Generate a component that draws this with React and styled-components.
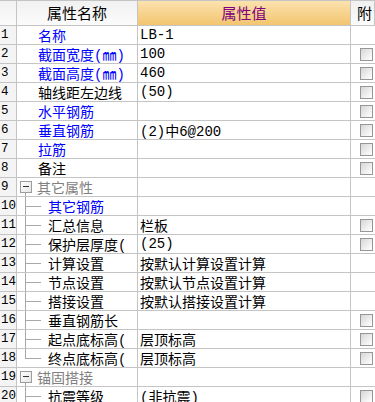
import React from 'react'
import styled, { createGlobalStyle, css } from 'styled-components'

const GlobalStyle = createGlobalStyle`
  html, body {
    margin: 0;
    padding: 0;
    background: #ffffff;
  }
`

const FONT = `"Liberation Mono", "Noto Sans CJK SC", monospace`
const LINE = '#c4c4c4'
const TREE = '#a8a8a8'

const Grid = styled.div`
  display: grid;
  grid-template-columns: 17px 121px 213px 24px;
  align-content: start;
  width: 375px;
  height: 402px;
  overflow: hidden;
  font-family: ${FONT};
  font-size: 14px;
  color: #000;
  border-top: 1px solid ${LINE};
  box-sizing: border-box;
`

const HeadCell = styled.div`
  height: 25px;
  display: flex;
  align-items: center;
  justify-content: ${({ $left }) => ($left ? 'flex-start' : 'center')};
  padding-left: ${({ $left }) => ($left ? '6px' : '0')};
  box-sizing: border-box;
  border-right: 1px solid ${LINE};
  border-bottom: 1px solid ${LINE};
  font-size: 15px;
  white-space: nowrap;
  overflow: hidden;
  background: linear-gradient(#f1f1f1, #fbfbfb);
  ${({ $accent }) =>
    $accent &&
    css`
      background: linear-gradient(#fbe2ae, #f2c56f);
      color: #800080;
    `}
`

const Cell = styled.div`
  height: 19px;
  box-sizing: border-box;
  border-right: 1px solid ${LINE};
  border-bottom: 1px solid ${LINE};
  display: flex;
  align-items: center;
  white-space: nowrap;
  overflow: hidden;
`

const NumCell = styled(Cell)`
  background: #f4f4f4;
  padding-left: 1px;
  font-size: 12.5px;
`

const NameCell = styled(Cell)`
  padding-left: ${({ $indent }) => $indent}px;
  color: ${({ $tone }) =>
    $tone === 'blue' ? '#0000ff' : $tone === 'gray' ? '#808080' : '#000'};
  align-items: stretch;
`

const Label = styled.span`
  display: flex;
  align-items: center;
`

const ValueCell = styled(Cell)`
  padding-left: 2px;
`

const AttachCell = styled(Cell)`
  padding-left: 9px;
  border-right: none;
`

const Check = styled.span`
  width: 13px;
  height: 13px;
  box-sizing: border-box;
  border: 1px solid #969696;
  background: linear-gradient(135deg, #d6d6d6, #f4f4f4 70%, #ffffff);
`

const Toggle = styled.span`
  position: relative;
  align-self: center;
  width: 12px;
  height: 12px;
  box-sizing: border-box;
  border: 1px solid #9c9c9c;
  background: linear-gradient(135deg, #ffffff, #e6e6e6);
  margin-right: 5px;
  &::before {
    content: '';
    position: absolute;
    left: 2px;
    right: 2px;
    top: 4px;
    height: 1px;
    background: #333;
  }
  &::after {
    content: '';
    position: absolute;
    left: 4px;
    top: 11px;
    width: 1px;
    height: 9px;
    background: ${TREE};
  }
`

const Branch = styled.span`
  position: relative;
  width: 31px;
  flex: none;
  &::before {
    content: '';
    position: absolute;
    left: 8px;
    top: -1px;
    width: 1px;
    height: ${({ $last }) => ($last ? '10px' : '20px')};
    background: ${TREE};
  }
  &::after {
    content: '';
    position: absolute;
    left: 8px;
    top: 9px;
    width: 16px;
    height: 1px;
    background: ${TREE};
  }
`

const rows = [
  { name: '名称', tone: 'blue', value: 'LB-1' },
  { name: '截面宽度(㎜)', tone: 'blue', value: '100', check: true },
  { name: '截面高度(㎜)', tone: 'blue', value: '460', check: true },
  { name: '轴线距左边线', value: '(50)', check: true },
  { name: '水平钢筋', tone: 'blue', value: '', check: true },
  { name: '垂直钢筋', tone: 'blue', value: '(2)中6@200', check: true },
  { name: '拉筋', tone: 'blue', value: '', check: true },
  { name: '备注', value: '', check: true },
  { name: '其它属性', group: true },
  { name: '其它钢筋', tone: 'blue', child: true },
  { name: '汇总信息', child: true, value: '栏板', check: true },
  { name: '保护层厚度(', child: true, value: '(25)', check: true },
  { name: '计算设置', child: true, value: '按默认计算设置计算' },
  { name: '节点设置', child: true, value: '按默认节点设置计算' },
  { name: '搭接设置', child: true, value: '按默认搭接设置计算' },
  { name: '垂直钢筋长', child: true, value: '', check: true },
  { name: '起点底标高(', child: true, value: '层顶标高', check: true },
  { name: '终点底标高(', child: true, last: true, value: '层顶标高', check: true },
  { name: '锚固搭接', group: true },
  { name: '抗震等级', child: true, value: '(非抗震)', check: true },
]

function NameContent({ row }) {
  if (row.group) {
    return (
      <>
        <Toggle />
        <Label>{row.name}</Label>
      </>
    )
  }
  if (row.child) {
    return (
      <>
        <Branch $last={row.last} />
        <Label>{row.name}</Label>
      </>
    )
  }
  return <Label>{row.name}</Label>
}

export default function App() {
  return (
    <>
      <GlobalStyle />
      <Grid>
        <HeadCell />
        <HeadCell>属性名称</HeadCell>
        <HeadCell $accent>属性值</HeadCell>
        <HeadCell $left>附</HeadCell>
        {rows.map((row, i) => (
          <React.Fragment key={i}>
            <NumCell>{i + 1}</NumCell>
            <NameCell
              $indent={row.group ? 3 : row.child ? 0 : 21}
              $tone={row.group ? 'gray' : row.tone}
            >
              <NameContent row={row} />
            </NameCell>
            <ValueCell>{row.value}</ValueCell>
            <AttachCell>{row.check && <Check />}</AttachCell>
          </React.Fragment>
        ))}
      </Grid>
    </>
  )
}
